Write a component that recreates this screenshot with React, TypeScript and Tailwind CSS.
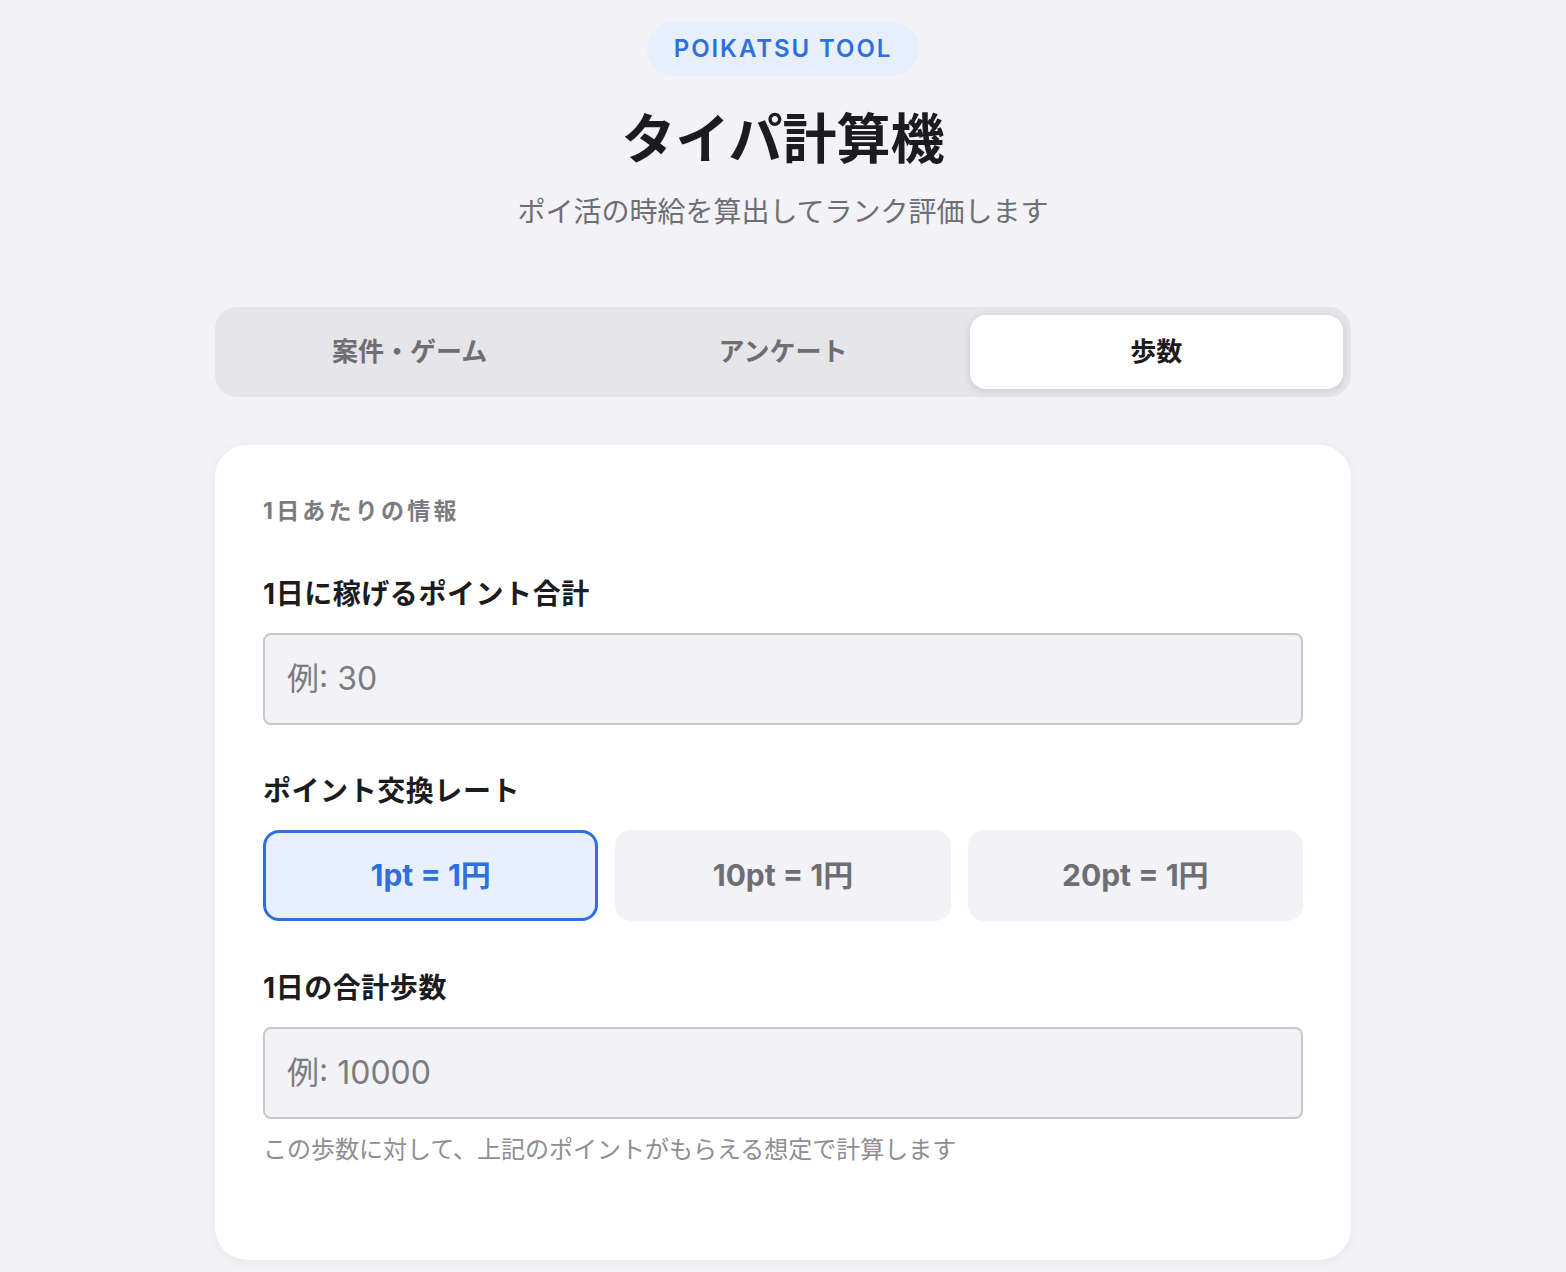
import React, { useState } from 'react';

const font = { fontFamily: 'Inter, "Noto Sans CJK JP", sans-serif' };

const tabs = ['案件・ゲーム', 'アンケート', '歩数'];
const rates = ['1pt = 1円', '10pt = 1円', '20pt = 1円'];

const App: React.FC = () => {
  const [tab, setTab] = useState(2);
  const [rate, setRate] = useState(0);
  const [points, setPoints] = useState('');
  const [steps, setSteps] = useState('');

  return (
    <div className="min-h-screen bg-[#f2f2f7]" style={font}>
      <div className="mx-auto w-[1136px] pt-[22px] pb-10 flex flex-col items-center">
        {/* header */}
        <div className="h-[54px] px-[27px] rounded-full bg-[#e8effc] flex items-center text-[24px] font-semibold tracking-[0.08em] text-[#2f6fde]">
          POIKATSU TOOL
        </div>
        <h1 className="mt-[32px] text-[54px] leading-[1.2] font-bold text-[#1c1c1e]">タイパ計算機</h1>
        <p className="mt-[20px] text-[28px] leading-[1.4] text-[#6e6e73]">ポイ活の時給を算出してランク評価します</p>

        {/* tabs */}
        <div className="mt-[75px] w-full h-[90px] p-2 rounded-[22px] bg-[#e5e5ea] grid grid-cols-3">
          {tabs.map((t, i) => (
            <button
              key={t}
              onClick={() => setTab(i)}
              className={
                i === tab
                  ? 'rounded-[16px] bg-white text-[26px] font-bold text-[#1c1c1e] shadow-[0_2px_8px_rgba(0,0,0,0.12)]'
                  : 'rounded-[16px] text-[26px] font-bold text-[#6e6e73]'
              }
            >
              {t}
            </button>
          ))}
        </div>

        {/* card */}
        <div className="mt-[48px] w-full bg-white rounded-[32px] shadow-[0_2px_12px_rgba(0,0,0,0.05)] px-[48px] pt-[50px] pb-[92px]">
          <div className="text-[23px] leading-[1.45] font-bold tracking-[0.14em] text-[#7c7c80]">1日あたりの情報</div>

          <label className="block mt-[47px] text-[28px] leading-[1.4] font-bold tracking-[0.02em] text-[#1c1c1e]">1日に稼げるポイント合計</label>
          <input
            value={points}
            onChange={(e) => setPoints(e.target.value)}
            placeholder="例: 30"
            className="mt-[18px] w-full h-[92px] px-[22px] rounded-[8px] border-2 border-[#c8c8cc] bg-[#f2f2f7] text-[32px] text-[#1c1c1e] placeholder:text-[#7c7c80] outline-none"
          />

          <label className="block mt-[47px] text-[28px] leading-[1.4] font-bold tracking-[0.02em] text-[#1c1c1e]">ポイント交換レート</label>
          <div className="mt-[19px] grid grid-cols-3 gap-[17px]">
            {rates.map((r, i) => (
              <button
                key={r}
                onClick={() => setRate(i)}
                className={
                  i === rate
                    ? 'h-[91px] rounded-[16px] border-[3px] border-[#2f6fde] bg-[#e9f0fd] text-[30px] font-bold text-[#2f6fde]'
                    : 'h-[91px] rounded-[16px] border-[3px] border-transparent bg-[#f2f2f7] text-[30px] font-bold text-[#6e6e73]'
                }
              >
                {r}
              </button>
            ))}
          </div>

          <label className="block mt-[48px] text-[28px] leading-[1.4] font-bold tracking-[0.02em] text-[#1c1c1e]">1日の合計歩数</label>
          <input
            value={steps}
            onChange={(e) => setSteps(e.target.value)}
            placeholder="例: 10000"
            className="mt-[19px] w-full h-[92px] px-[22px] rounded-[8px] border-2 border-[#c8c8cc] bg-[#f2f2f7] text-[32px] text-[#1c1c1e] placeholder:text-[#7c7c80] outline-none"
          />
          <p className="mt-[13px] text-[24px] leading-[1.5] text-[#8e8e93]">この歩数に対して、上記のポイントがもらえる想定で計算します</p>
        </div>
      </div>
    </div>
  );
};

export default App;
